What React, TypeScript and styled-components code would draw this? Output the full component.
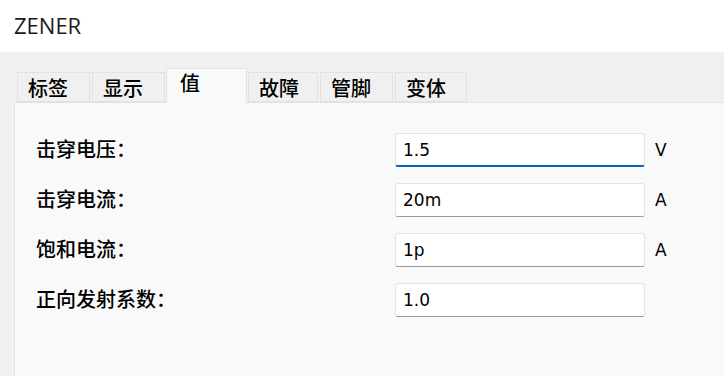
import React from "react";
import styled, { createGlobalStyle } from "styled-components";

const Global = createGlobalStyle`
  html, body { margin: 0; padding: 0; background: #ffffff; }
  #root { width: 724px; height: 376px; overflow: hidden; }
`;

const Window = styled.div`
  width: 724px;
  height: 376px;
  display: flex;
  flex-direction: column;
  background: #f0f0f0;
  overflow: hidden;
`;

const Header = styled.div`
  height: 52px;
  flex: none;
  background: #ffffff;
  display: flex;
  align-items: center;
  padding-left: 14px;
  box-sizing: border-box;
`;

const Title = styled.span`
  font-family: "Open Sans", "Noto Sans", sans-serif;
  font-size: 22px;
  color: #1b1b1b;
  margin-top: -2px;
`;

const Body = styled.div`
  flex: 1;
  display: flex;
  flex-direction: column;
  padding: 16px 0 0 14px;
  min-height: 0;
`;

const TabBar = styled.div`
  display: flex;
  align-items: flex-end;
  height: 34px;
  padding-left: 3px;
  gap: 2px;
  position: relative;
  z-index: 1;
`;

const Tab = styled.div<{ $w: number; $active?: boolean }>`
  box-sizing: border-box;
  width: ${(p) => (p.$active ? p.$w + 2 : p.$w)}px;
  margin: 0 ${(p) => (p.$active ? -1 : 0)}px;
  height: ${(p) => (p.$active ? 35 : 30)}px;
  margin-bottom: ${(p) => (p.$active ? -1 : 0)}px;
  padding-left: ${(p) => (p.$active ? 13 : 10)}px;
  padding-top: ${(p) => (p.$active ? 1 : 2)}px;
  background: ${(p) => (p.$active ? "#f9f9f9" : "#f0f0f0")};
  border: 1px solid #e2e2e2;
  border-bottom: ${(p) => (p.$active ? "none" : "1px solid #e2e2e2")};
  font-family: "Noto Sans CJK SC", "Noto Sans", sans-serif;
  font-size: 20px;
  font-weight: 500;
  line-height: 26px;
  color: #000000;
  white-space: nowrap;
`;

const Panel = styled.div`
  flex: 1;
  background: #f9f9f9;
  border: 1px solid #e2e2e2;
  border-right: none;
  border-bottom: none;
  padding: 30px 0 0 21px;
`;

const Form = styled.div`
  display: grid;
  grid-template-columns: 349px 250px auto;
  grid-auto-rows: 34px;
  column-gap: 10px;
  row-gap: 16px;
  align-items: center;
`;

const Label = styled.div`
  font-family: "Noto Sans CJK SC", "Noto Sans", sans-serif;
  font-size: 20px;
  font-weight: 500;
  color: #000000;
  line-height: 26px;
  margin-top: -2px;
`;

const Field = styled.div<{ $focused?: boolean }>`
  box-sizing: border-box;
  height: 34px;
  background: #ffffff;
  border: 1px solid #e4e4e4;
  border-bottom: ${(p) => (p.$focused ? "2px solid #0067c0" : "1px solid #9a9a9a")};
  border-radius: 3px;
  display: flex;
  align-items: center;
  padding-left: 7px;
  font-family: "DejaVu Sans", "Liberation Sans", sans-serif;
  font-size: 17px;
  color: #000000;
`;

const Unit = styled.div`
  font-family: "DejaVu Sans", "Liberation Sans", sans-serif;
  font-size: 17px;
  color: #000000;
`;

const tabs = [
  { t: "标签", w: 73 },
  { t: "显示", w: 73 },
  { t: "值", w: 79, active: true },
  { t: "故障", w: 70 },
  { t: "管脚", w: 73 },
  { t: "变体", w: 72 },
];

const rows = [
  { label: "击穿电压：", value: "1.5", unit: "V", focused: true },
  { label: "击穿电流：", value: "20m", unit: "A" },
  { label: "饱和电流：", value: "1p", unit: "A" },
  { label: "正向发射系数：", value: "1.0", unit: "" },
];

export default function App() {
  return (
    <>
      <Global />
      <Window>
        <Header>
          <Title>ZENER</Title>
        </Header>
        <Body>
          <TabBar>
            {tabs.map((t) => (
              <Tab key={t.t} $w={t.w} $active={t.active}>
                {t.t}
              </Tab>
            ))}
          </TabBar>
          <Panel>
            <Form>
              {rows.map((r) => (
                <React.Fragment key={r.label}>
                  <Label>{r.label}</Label>
                  <Field $focused={r.focused}>{r.value}</Field>
                  <Unit>{r.unit}</Unit>
                </React.Fragment>
              ))}
            </Form>
          </Panel>
        </Body>
      </Window>
    </>
  );
}
